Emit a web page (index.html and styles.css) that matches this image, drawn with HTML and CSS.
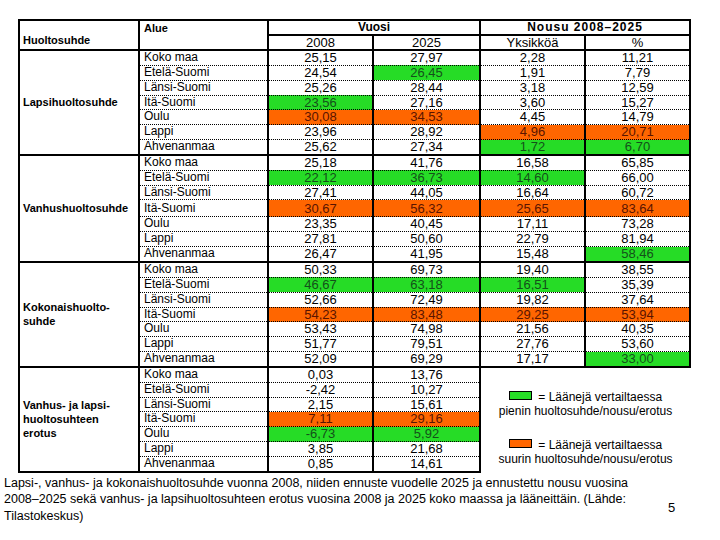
FILE: index.html
```html
<!DOCTYPE html>
<html lang="fi">
<head>
<meta charset="utf-8">
<link rel="stylesheet" href="styles.css">
</head>
<body>
<div class="page">
<table class="t">
<colgroup>
<col class="c-hs"><col class="c-al"><col class="c-n"><col class="c-n2"><col class="c-n"><col class="c-n">
</colgroup>
<thead>
<tr class="h1">
<th rowspan="2" class="hs">Huoltosuhde</th>
<th rowspan="2" class="al">Alue</th>
<th colspan="2" class="grp">Vuosi</th>
<th colspan="2" class="grp sp">Nousu 2008–2025</th>
</tr>
<tr class="h2">
<th>2008</th><th>2025</th><th>Yksikköä</th><th>%</th>
</tr>
</thead>
<tbody class="g">
<tr><td rowspan="7" class="lab">Lapsihuoltosuhde</td><td class="a">Koko maa</td><td>25,15</td><td>27,97</td><td>2,28</td><td>11,21</td></tr>
<tr><td class="a">Etelä-Suomi</td><td>24,54</td><td class="gr">26,45</td><td>1,91</td><td>7,79</td></tr>
<tr><td class="a">Länsi-Suomi</td><td>25,26</td><td>28,44</td><td>3,18</td><td>12,59</td></tr>
<tr><td class="a">Itä-Suomi</td><td class="gr">23,56</td><td>27,16</td><td>3,60</td><td>15,27</td></tr>
<tr><td class="a">Oulu</td><td class="or">30,08</td><td class="or">34,53</td><td>4,45</td><td>14,79</td></tr>
<tr><td class="a">Lappi</td><td>23,96</td><td>28,92</td><td class="or">4,96</td><td class="or">20,71</td></tr>
<tr class="last"><td class="a">Ahvenanmaa</td><td>25,62</td><td>27,34</td><td class="gr">1,72</td><td class="gr">6,70</td></tr>
</tbody>
<tbody class="g">
<tr><td rowspan="7" class="lab">Vanhushuoltosuhde</td><td class="a">Koko maa</td><td>25,18</td><td>41,76</td><td>16,58</td><td>65,85</td></tr>
<tr><td class="a">Etelä-Suomi</td><td class="gr">22,12</td><td class="gr">36,73</td><td class="gr">14,60</td><td>66,00</td></tr>
<tr><td class="a">Länsi-Suomi</td><td>27,41</td><td>44,05</td><td>16,64</td><td>60,72</td></tr>
<tr class="tall"><td class="a">Itä-Suomi</td><td class="or">30,67</td><td class="or">56,32</td><td class="or">25,65</td><td class="or">83,64</td></tr>
<tr><td class="a">Oulu</td><td>23,35</td><td>40,45</td><td>17,11</td><td>73,28</td></tr>
<tr><td class="a">Lappi</td><td>27,81</td><td>50,60</td><td>22,79</td><td>81,94</td></tr>
<tr class="last"><td class="a">Ahvenanmaa</td><td>26,47</td><td>41,95</td><td>15,48</td><td class="gr">58,46</td></tr>
</tbody>
<tbody class="g">
<tr><td rowspan="7" class="lab">Kokonaishuolto-<br>suhde</td><td class="a">Koko maa</td><td>50,33</td><td>69,73</td><td>19,40</td><td>38,55</td></tr>
<tr><td class="a">Etelä-Suomi</td><td class="gr">46,67</td><td class="gr">63,18</td><td class="gr">16,51</td><td>35,39</td></tr>
<tr><td class="a">Länsi-Suomi</td><td>52,66</td><td>72,49</td><td>19,82</td><td>37,64</td></tr>
<tr><td class="a">Itä-Suomi</td><td class="or">54,23</td><td class="or">83,48</td><td class="or">29,25</td><td class="or">53,94</td></tr>
<tr><td class="a">Oulu</td><td>53,43</td><td>74,98</td><td>21,56</td><td>40,35</td></tr>
<tr><td class="a">Lappi</td><td>51,77</td><td>79,51</td><td>27,76</td><td>53,60</td></tr>
<tr class="last"><td class="a">Ahvenanmaa</td><td>52,09</td><td>69,29</td><td>17,17</td><td class="gr">33,00</td></tr>
</tbody>
<tbody class="g">
<tr><td rowspan="7" class="lab">Vanhus- ja lapsi-<br>huoltosuhteen<br>erotus</td><td class="a">Koko maa</td><td>0,03</td><td>13,76</td>
<td rowspan="7" colspan="2" class="legend">
<div class="leg">
<div class="li"><span class="sw sw-g"></span> = Läänejä vertailtaessa<br>pienin huoltosuhde/nousu/erotus</div>
<div class="li"><span class="sw sw-o"></span> = Läänejä vertailtaessa<br>suurin huoltosuhde/nousu/erotus</div>
</div>
</td></tr>
<tr><td class="a">Etelä-Suomi</td><td>-2,42</td><td>10,27</td></tr>
<tr><td class="a">Länsi-Suomi</td><td>2,15</td><td>15,61</td></tr>
<tr><td class="a">Itä-Suomi</td><td class="or">7,11</td><td class="or">29,16</td></tr>
<tr><td class="a">Oulu</td><td class="gr">-6,73</td><td class="gr">5,92</td></tr>
<tr><td class="a">Lappi</td><td>3,85</td><td>21,68</td></tr>
<tr class="last"><td class="a">Ahvenanmaa</td><td>0,85</td><td>14,61</td></tr>
</tbody>
</table>
<div class="foot">
<p class="cap">Lapsi-, vanhus- ja kokonaishuoltosuhde vuonna 2008, niiden ennuste vuodelle 2025 ja ennustettu nousu vuosina<br>2008–2025 sekä vanhus- ja lapsihuoltosuhteen erotus vuosina 2008 ja 2025 koko maassa ja lääneittäin. (Lähde:<br>Tilastokeskus)</p>
<span class="pg">5</span>
</div>
</div>
</body>
</html>
```
FILE: styles.css
```css
html, body {
  margin: 0;
  padding: 0;
  background: #fff;
}
body {
  font-family: "Liberation Sans", Arial, sans-serif;
  color: #000;
  width: 720px;
  height: 540px;
  overflow: hidden;
}
.page {
  padding: 19px 0 0 18px;
}
.t {
  border-collapse: collapse;
  table-layout: fixed;
  width: 672px;
}
.c-hs { width: 120px; }
.c-al { width: 129px; }
.c-n { width: 105px; }
.c-n2 { width: 107px; }

.t th {
  border: 2px solid #000;
  padding: 0;
  font-size: 13px;
  font-weight: normal;
  line-height: 13px;
  height: 13px;
}
.t th.hs {
  text-align: left;
  vertical-align: bottom;
  font-weight: bold;
  font-size: 11px;
  padding: 0 0 2px 3px;
}
.t th.al {
  text-align: left;
  vertical-align: top;
  font-weight: bold;
  font-size: 11px;
  padding: 1px 0 0 4px;
}
.t th.grp {
  font-weight: bold;
  font-size: 12px;
}
.t th.sp {
  letter-spacing: 1px;
}
.t td {
  border-left: 2px solid #000;
  border-right: 2px solid #000;
  border-bottom: 1px dotted #000;
  padding: 0;
  height: 13.85px;
  line-height: 13.85px;
  font-size: 13px;
  text-align: center;
  white-space: nowrap;
}
.t tr.last td {
  border-bottom: 2px solid #000;
}
.t tr.tall td {
  height: 16px;
}
.t td.a {
  text-align: left;
  padding-left: 4px;
  font-size: 12px;
  border-right: 2px solid #000;
}
.t td.lab {
  border: 2px solid #000;
  text-align: left;
  vertical-align: middle;
  font-weight: bold;
  font-size: 11px;
  line-height: 14px;
  padding-left: 3px;
  white-space: normal;
}
.t td.gr {
  background: #26dc26;
  color: #14501a;
}
.t td.or {
  background: #ff6600;
  color: #5a1400;
}
.t td.legend {
  border-left: 2px solid #000;
  border-right: none;
  border-bottom: none;
  vertical-align: top;
  white-space: normal;
  padding: 0;
}
.leg {
  display: flex;
  flex-direction: column;
  gap: 19px;
  padding: 22px 0 0 0;
  font-size: 12px;
  line-height: 14.5px;
  text-align: center;
}
.sw {
  display: inline-block;
  width: 21px;
  height: 7px;
  border: 1px solid #000;
  vertical-align: 1px;
  margin-right: 3px;
}
.sw-g { background: #26dc26; }
.sw-o { background: #ff6600; }

.foot {
  display: flex;
  align-items: flex-end;
  margin: 2px 0 0 -14px;
}
.cap {
  margin: 0;
  width: 656px;
  font-size: 12.5px;
  line-height: 16.5px;
}
.pg {
  font-size: 13px;
  margin: 0 0 9px 8px;
}
```
